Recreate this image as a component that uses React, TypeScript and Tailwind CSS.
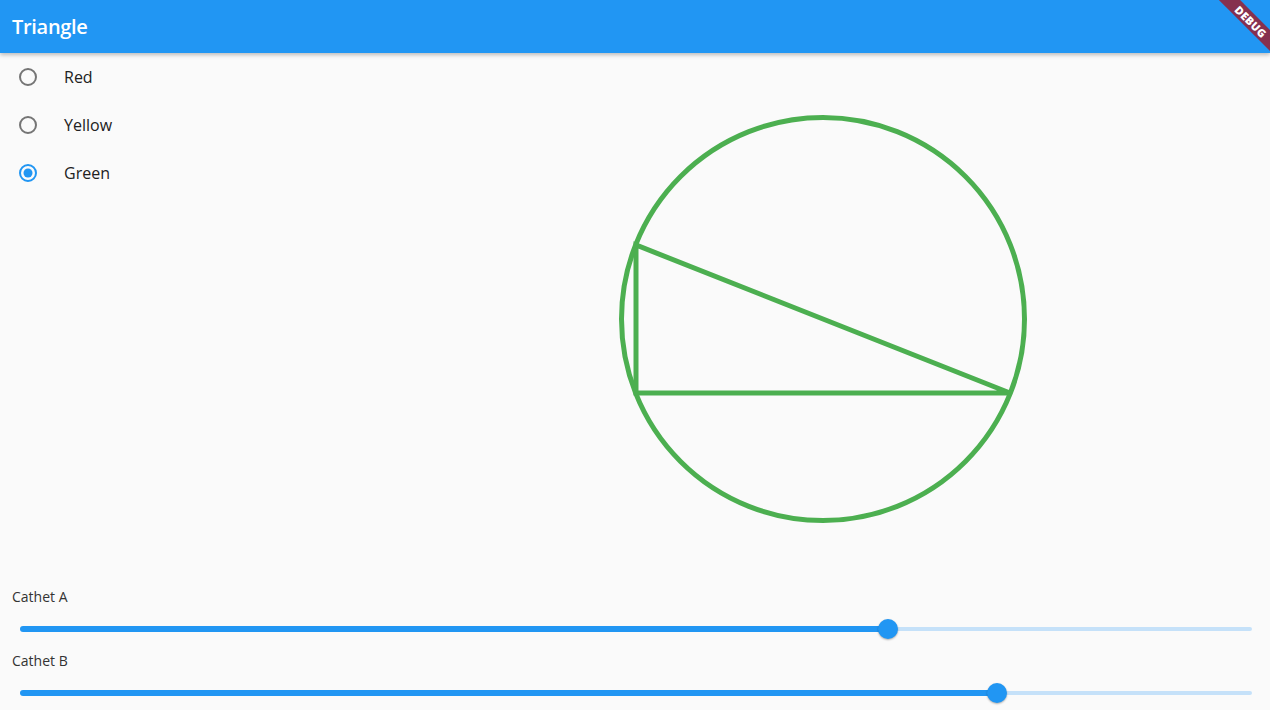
import { useState } from 'react';

const font = { fontFamily: '"Open Sans", "Noto Sans", sans-serif' };

function Radio({ checked }: { checked: boolean }) {
  return (
    <svg width="20" height="20" viewBox="0 0 20 20">
      <circle cx="10" cy="10" r="8" fill="none" stroke={checked ? '#2196F3' : '#757575'} strokeWidth="2" />
      {checked && <circle cx="10" cy="10" r="4.5" fill="#2196F3" />}
    </svg>
  );
}

function Slider({ value }: { value: number }) {
  return (
    <div className="h-10 flex items-center ml-[20px] mr-[18px]">
      <div className="relative w-full h-[6px]">
        <div className="absolute right-0 top-[1px] h-[4px] bg-[#c5e1f9] rounded-r-full" style={{ left: `${value * 100}%` }} />
        <div className="absolute left-0 top-0 h-[6px] bg-[#2196F3] rounded-l-full" style={{ width: `${value * 100}%` }} />
        <div
          className="absolute top-1/2 w-5 h-5 -ml-[10px] -mt-[10px] rounded-full bg-[#2196F3] shadow-[0_1px_2px_rgba(0,0,0,0.3)]"
          style={{ left: `${value * 100}%` }}
        />
      </div>
    </div>
  );
}

export default function App() {
  const [color, setColor] = useState('Green');
  const colors = ['Red', 'Yellow', 'Green'];

  return (
    <div className="h-screen overflow-hidden bg-[#fafafa] flex flex-col" style={font}>
      <header className="relative h-[53px] shrink-0 bg-[#2196F3] flex items-center px-3 shadow-[0_2px_4px_rgba(0,0,0,0.25)] z-10 overflow-hidden">
        <h1 className="text-white text-[20px] font-semibold tracking-[-0.3px]">Triangle</h1>
        <div className="absolute left-[1206px] top-[14px] w-[90px] h-[15px] rotate-45 bg-[#86304f] flex items-center justify-center">
          <span className="text-white text-[11px] font-extrabold tracking-[0.3px] leading-none">DEBUG</span>
        </div>
      </header>

      <div className="h-[532px] shrink-0 flex">
        <div className="w-[376px] shrink-0">
          {colors.map((c) => (
            <div key={c} className="h-12 flex items-center pl-[18px] cursor-pointer" onClick={() => setColor(c)}>
              <Radio checked={color === c} />
              <span className="ml-[26px] text-[16px] text-[#212121]">{c}</span>
            </div>
          ))}
        </div>
        <div className="flex-1 flex items-center justify-center">
          <svg width="410" height="410" viewBox="0 0 410 410">
            <circle cx="205" cy="205" r="201.5" fill="none" stroke="#4CAF50" strokeWidth="5" />
            <polygon points="18,131 18,279 392,279" fill="none" stroke="#4CAF50" strokeWidth="5" strokeLinejoin="miter" />
          </svg>
        </div>
      </div>

      <div className="shrink-0">
        <div className="h-6 flex items-center px-3 pb-[2px] text-[14px] text-[#333]">Cathet A</div>
        <Slider value={0.7045} />
        <div className="h-6 flex items-center px-3 pb-[2px] text-[14px] text-[#333]">Cathet B</div>
        <Slider value={0.793} />
      </div>
    </div>
  );
}
